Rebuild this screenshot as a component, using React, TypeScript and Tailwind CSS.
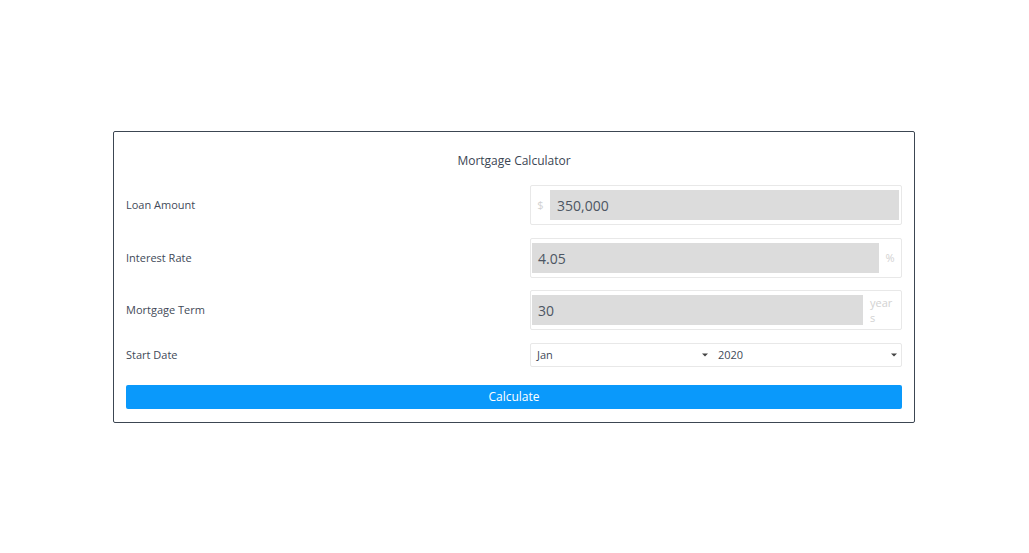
const font = { fontFamily: '"Open Sans", "Noto Sans", Arial, sans-serif' };

const Caret = () => (
  <svg width="6" height="4" viewBox="0 0 6 4" className="shrink-0">
    <path d="M0 0.5h6L3 3.5z" fill="#444" />
  </svg>
);

const Row = ({
  label,
  children,
  tall = true,
  className = "",
}: {
  label: string;
  children: React.ReactNode;
  tall?: boolean;
  className?: string;
}) => (
  <div className={`flex items-center ${tall ? "h-[40px]" : "h-[24px]"} ${className}`}>
    <div className="flex-1 text-[11px] text-[#3f4a58]">{label}</div>
    {children}
  </div>
);

export default function App() {
  return (
    <div className="min-h-[553px] w-full bg-white pt-[131px] pl-[113px]" style={font}>
      <div className="w-[802px] rounded-[2px] border border-[#3c4652] px-[12px] pb-[13px]">
        <h1 className="pt-[20px] pb-[15px] text-center text-[12px] leading-[18px] font-medium text-[#3b4553]">
          Mortgage Calculator
        </h1>

        <div className="flex flex-col">
          <Row label="Loan Amount">
            <div className="flex h-[40px] w-[372px] items-center rounded-[2px] border border-[#e8e8e8] py-[4px] pr-[2px]">
              <span className="w-[19px] text-center text-[11px] text-[#d2d2d2]">$</span>
              <div className="flex h-[30px] flex-1 items-center bg-[#dcdcdc] pl-[7px] text-[14px] text-[#4d5663]">
                350,000
              </div>
            </div>
          </Row>

          <Row label="Interest Rate" className="mt-[13px]">
            <div className="flex h-[40px] w-[372px] items-center rounded-[2px] border border-[#e8e8e8] py-[4px] pl-[1px]">
              <div className="flex h-[30px] flex-1 items-center bg-[#dcdcdc] pl-[6px] text-[14px] text-[#4d5663]">
                4.05
              </div>
              <span className="w-[22px] text-center text-[11px] text-[#d2d2d2]">%</span>
            </div>
          </Row>

          <Row label="Mortgage Term" className="mt-[12px]">
            <div className="flex h-[40px] w-[372px] items-center rounded-[2px] border border-[#e8e8e8] py-[4px] pl-[1px]">
              <div className="flex h-[30px] flex-1 items-center bg-[#dcdcdc] pl-[6px] text-[14px] text-[#4d5663]">
                30
              </div>
              <span className="w-[38px] pl-[7px] pr-[7px] text-[11px] leading-[15px] break-all text-[#d2d2d2]">
                years
              </span>
            </div>
          </Row>

          <Row label="Start Date" tall={false} className="mt-[13px]">
            <div className="flex h-[24px] w-[372px] items-center rounded-[2px] border border-[#e8e8e8] text-[11px] text-[#3f4a58]">
              <div className="flex w-[181px] items-center justify-between pl-[6px] pr-[4px]">
                <span>Jan</span>
                <Caret />
              </div>
              <div className="flex flex-1 items-center justify-between pl-[6px] pr-[4px]">
                <span>2020</span>
                <Caret />
              </div>
            </div>
          </Row>
        </div>

        <button className="mt-[18px] flex h-[24px] w-full items-center justify-center rounded-[2px] bg-[#0a99fb] text-[12px] font-medium text-white">
          Calculate
        </button>
      </div>
    </div>
  );
}
